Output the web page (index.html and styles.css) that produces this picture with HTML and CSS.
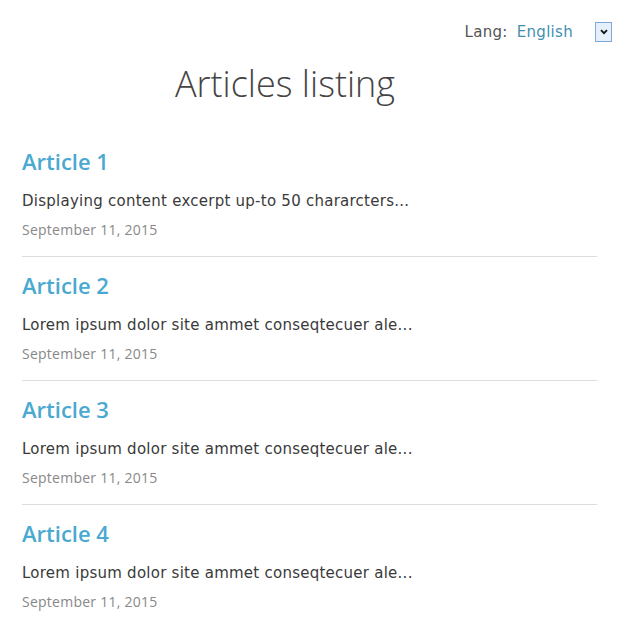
FILE: index.html
```html
<!DOCTYPE html>
<html lang="en">
<head>
<meta charset="utf-8">
<title>Articles listing</title>
<link rel="stylesheet" href="styles.css">
</head>
<body>
<div class="page">
  <div class="lang-bar">
    <span class="lang-label">Lang:</span>
    <span class="lang-value">English</span>
    <span class="lang-arrow"><svg width="8" height="6" viewBox="0 0 8 6"><path d="M1 1.2 L4 4.2 L7 1.2" fill="none" stroke="#111" stroke-width="1.8"/></svg></span>
  </div>
  <h1 class="title">Articles listing</h1>
  <ul class="articles">
    <li class="article">
      <h2 class="article-title">Article 1</h2>
      <p class="excerpt">Displaying content excerpt up-to 50 chararcters...</p>
      <p class="date">September 11, 2015</p>
    </li>
    <li class="article">
      <h2 class="article-title">Article 2</h2>
      <p class="excerpt">Lorem ipsum dolor site ammet conseqtecuer ale...</p>
      <p class="date">September 11, 2015</p>
    </li>
    <li class="article">
      <h2 class="article-title">Article 3</h2>
      <p class="excerpt">Lorem ipsum dolor site ammet conseqtecuer ale...</p>
      <p class="date">September 11, 2015</p>
    </li>
    <li class="article last">
      <h2 class="article-title">Article 4</h2>
      <p class="excerpt">Lorem ipsum dolor site ammet conseqtecuer ale...</p>
      <p class="date">September 11, 2015</p>
    </li>
  </ul>
</div>
</body>
</html>
```
FILE: styles.css
```css
html, body {
  margin: 0;
  padding: 0;
  background: #fff;
}
body {
  font-family: "Open Sans", "DejaVu Sans", sans-serif;
  color: #444;
}
.page {
  padding: 0 20px 0 22px;
}
.lang-bar {
  display: flex;
  justify-content: flex-end;
  align-items: center;
  padding-top: 22px;
  height: 20px;
  font-family: "DejaVu Sans", sans-serif;
  font-size: 15px;
}
.lang-label {
  color: #555;
  margin-right: 9px;
  letter-spacing: 0.3px;
}
.lang-value {
  color: #3f8fb0;
  margin-right: 22px;
  letter-spacing: 0.3px;
}
.lang-arrow {
  box-sizing: border-box;
  width: 17px;
  height: 20px;
  border: 1px solid #7fa9d8;
  background: #e6f0fb;
  display: flex;
  align-items: center;
  justify-content: center;
}
.title {
  margin: 20px 0 0;
  width: 526px;
  text-align: center;
  font-weight: 300;
  font-size: 36px;
  color: #444;
  line-height: 44px;
}
.articles {
  list-style: none;
  margin: 27px 0 0;
  padding: 0;
  width: 575px;
}
.article {
  border-bottom: 1px solid #ddd;
  padding: 13px 0 16px;
}
.article.last {
  border-bottom: none;
}
.article-title {
  margin: 0;
  font-size: 22px;
  font-weight: 600;
  color: #4aa9d0;
  line-height: 30px;
}
.excerpt {
  margin: 15px 0 0;
  font-family: "DejaVu Sans", sans-serif;
  font-size: 15px;
  letter-spacing: 0.25px;
  line-height: 20px;
  color: #3a3a3a;
}
.date {
  margin: 9px 0 0;
  font-size: 14px;
  letter-spacing: 0.25px;
  line-height: 20px;
  color: #888;
}
```
